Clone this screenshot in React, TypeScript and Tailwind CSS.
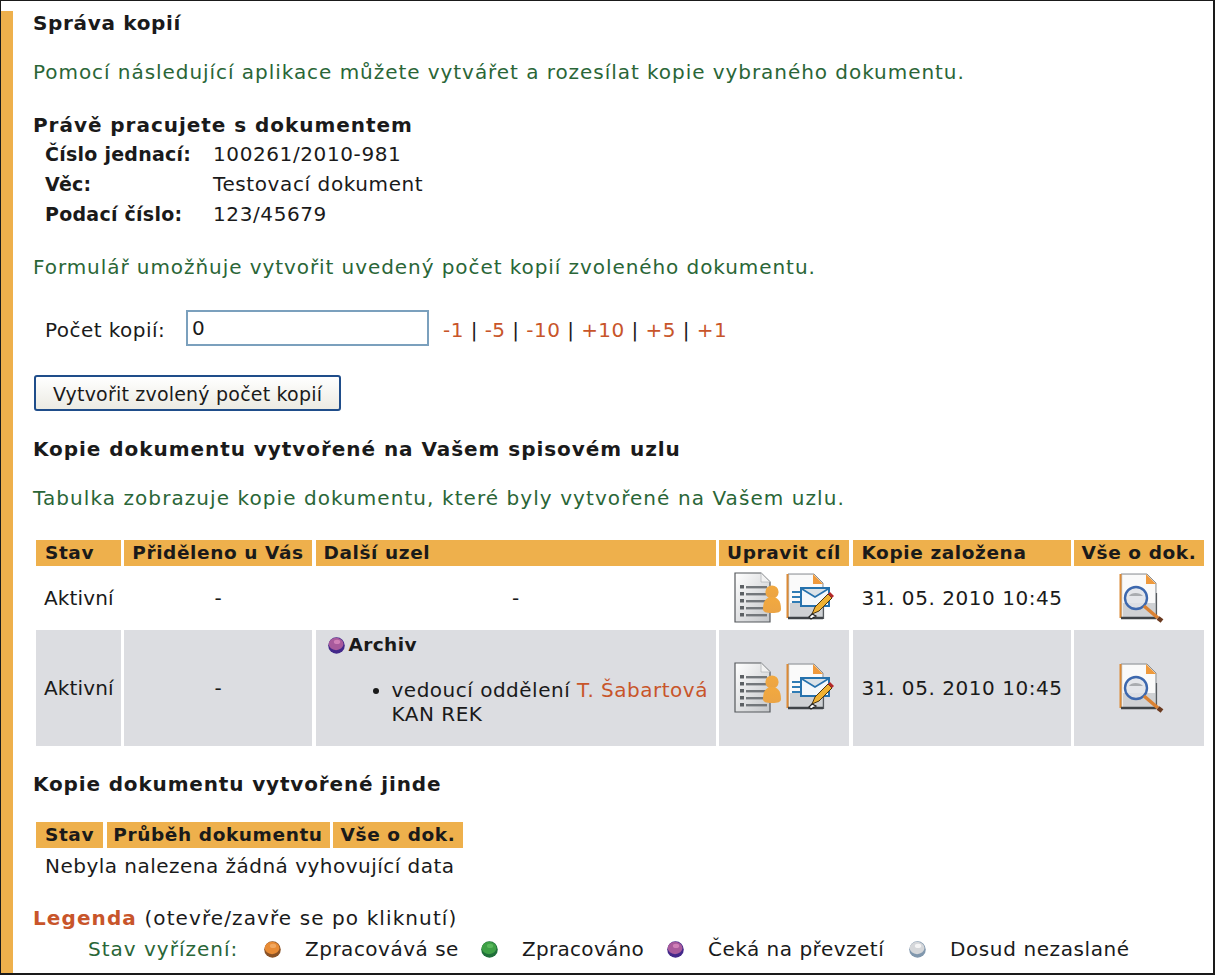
import React from 'react';

const font = { fontFamily: '"DejaVu Sans", Verdana, sans-serif' };

function Dot({ light, mid, dark, size = 17 }: { light: string; mid: string; dark: string; size?: number }) {
  return (
    <svg width={size} height={size} viewBox="0 0 16 16" className="shrink-0">
      <circle cx="8" cy="8" r="7.8" fill={dark} />
      <ellipse cx="7.6" cy="6.6" rx="7" ry="5.8" fill={mid} />
      <ellipse cx="8.5" cy="4.6" rx="3" ry="2" fill={light} />
    </svg>
  );
}

const Purple = (p: { size?: number }) => <Dot light="#d080b8" mid="#a85a9c" dark="#43288a" size={p.size} />;

function DocBase({ children }: { children: React.ReactNode }) {
  return (
    <>
      <path d="M3 1h26l9 9v35H3z" fill="#eceded" stroke="#8b8f94" strokeWidth="1" />
      <path d="M5 2h24l8 8v20H5z" fill="#fafafa" />
      <path d="M5 30h32v14H5z" fill="#cfd1d4" />
      <rect x="1.5" y="1" width="2" height="44" fill="#dc8a35" />
      <path d="M28 1l10 10H28z" fill="#ef9a3c" />
      <path d="M3 45h35" stroke="#3f4347" strokeWidth="2.4" />
      <path d="M38.5 20v26" stroke="#55595e" strokeWidth="1.2" />
      {children}
    </>
  );
}

function PersonDoc() {
  return (
    <svg width="50" height="54" viewBox="0 0 50 54" className="shrink-0">
      <defs>
        <linearGradient id="pg" x1="0" y1="0" x2="1" y2="1">
          <stop offset="0" stopColor="#ffffff" />
          <stop offset="1" stopColor="#c4c6c9" />
        </linearGradient>
        <linearGradient id="og" x1="0" y1="0" x2="0" y2="1">
          <stop offset="0" stopColor="#f2a93f" />
          <stop offset="1" stopColor="#eba445" />
        </linearGradient>
      </defs>
      <path d="M2 2h26l9 9v40H2z" fill="url(#pg)" stroke="#55585c" strokeWidth="1.2" />
      <path d="M28 2l9 9h-9z" fill="#f2f2f2" stroke="#b5b7ba" strokeWidth="0.8" />
      {[15, 22, 29, 36, 43].map((y) => (
        <g key={y}>
          <rect x="7" y={y - 1} width="4" height="3.5" fill="#5c6064" />
          <rect x="13" y={y} width="21" height="2.4" fill="#73777b" />
        </g>
      ))}
      <circle cx="39" cy="21" r="6.6" fill="url(#og)" />
      <path d="M30 38c0-9 4-12 9-12s9 3 9 12c0 3-3 4-9 4s-9-1-9-4z" fill="url(#og)" />
    </svg>
  );
}

function EnvelopeDoc() {
  return (
    <svg width="50" height="54" viewBox="0 0 50 50" className="shrink-0">
      <DocBase>
        <path d="M7 19h10M7 24h10M7 29h10" stroke="#2f7cb5" strokeWidth="2" />
        <path d="M16 15h28v18H16z" fill="#f4f8fb" stroke="#2672ad" strokeWidth="2" />
        <path d="M17 16l13 8 13-8" fill="#dce3e8" stroke="#2672ad" strokeWidth="1.6" />
        <path d="M27 41l3-7 13-13 4 4-13 13z" fill="#f0b232" stroke="#4a3510" strokeWidth="1" />
        <path d="M43 21l2-2 4 4-2 2z" fill="#b3282a" />
        <path d="M24 44l3-3 4 2-5 3z" fill="#fff" stroke="#222" strokeWidth="1.2" />
      </DocBase>
    </svg>
  );
}

function SearchDoc() {
  return (
    <svg width="50" height="50" viewBox="0 0 50 50" className="shrink-0">
      <DocBase>
        <circle cx="18" cy="25" r="11" fill="#dfe2e6" fillOpacity="0.85" stroke="#3d68ae" strokeWidth="2.4" />
        <path d="M11 23c2-4 11-4 14 0z" fill="#a9acb0" />
        <path d="M26 33l14 12" stroke="#db8233" strokeWidth="3.6" />
        <path d="M40 45l4 3" stroke="#6b3a20" strokeWidth="4.6" />
      </DocBase>
    </svg>
  );
}

function Th({ children, className = '' }: { children: React.ReactNode; className?: string }) {
  return <div className={`bg-[#eeb04c] h-[26px] leading-[26px] text-[18.5px] font-bold text-[#1a1a1a] tracking-[0.6px] text-center ${className}`}>{children}</div>;
}

function Td({ children, gray, className = '' }: { children: React.ReactNode; gray?: boolean; className?: string }) {
  return <div className={`flex items-center ${gray ? 'bg-[#dcdde1]' : ''} ${className}`}>{children}</div>;
}

function Row({ gray, children }: { gray?: boolean; children: React.ReactNode }) {
  return (
    <>
      <Td gray={gray} className="pl-[8px] tracking-[0.15px]">Aktivní</Td>
      <Td gray={gray} className="justify-center">-</Td>
      {children}
      <Td gray={gray} className="justify-center gap-[2px]"><PersonDoc /><EnvelopeDoc /></Td>
      <Td gray={gray} className="pl-[9px] whitespace-nowrap tracking-[0.55px]">31. 05. 2010 10:45</Td>
      <Td gray={gray} className="justify-center pl-[8px]"><SearchDoc /></Td>
    </>
  );
}

export default function App() {
  return (
    <div style={font} className="h-[975px] w-[1215px] overflow-hidden bg-white border-t border-b-2 border-l border-r-2 border-[#1a1a1a] text-[#1a1a1a] text-[20px]">
      <div className="h-full border-l-[12px] border-[#eeb04c] pl-[20px]">
        <h1 className="font-bold text-[20px] leading-[24px] mt-[10px] tracking-[0.67px]">Správa kopií</h1>
        <p className="text-[#2a6637] leading-[24px] mt-[25px] tracking-[0.95px] whitespace-nowrap">Pomocí následující aplikace můžete vytvářet a rozesílat kopie vybraného dokumentu.</p>

        <h2 className="font-bold text-[20px] leading-[26px] mt-[28px] tracking-[0.96px]">Právě pracujete s dokumentem</h2>
        <div className="grid grid-cols-[168px_1fr] ml-[12px] mt-[1px] leading-[30px] tracking-[0.6px]">
          <b className="text-[19px] tracking-[0.25px]">Číslo jednací:</b><span>100261/2010-981</span>
          <b className="text-[19px] tracking-[0.25px]">Věc:</b><span>Testovací dokument</span>
          <b className="text-[19px] tracking-[0.25px]">Podací číslo:</b><span>123/45679</span>
        </div>

        <p className="text-[#2a6637] leading-[24px] mt-[26px] tracking-[0.93px] whitespace-nowrap">Formulář umožňuje vytvořit uvedený počet kopií zvoleného dokumentu.</p>

        <div className="flex items-center ml-[12px] mt-[31px] h-[36px]">
          <span className="w-[141px] mt-[3px] tracking-[0.45px]">Počet kopií:</span>
          <input readOnly value="0" className="w-[243px] h-[36px] border-2 border-[#7ba0bd] bg-white px-[4px] outline-none" />
          <span className="ml-[14px] mt-[3px] whitespace-nowrap tracking-[0.45px]">
            <a className="text-[#c8552a]">-1</a> | <a className="text-[#c8552a]">-5</a> | <a className="text-[#c8552a]">-10</a> | <a className="text-[#c8552a]">+10</a> | <a className="text-[#c8552a]">+5</a> | <a className="text-[#c8552a]">+1</a>
          </span>
        </div>

        <button className="block mt-[29px] ml-[1px] w-[307px] h-[36px] pt-[2px] rounded-[3px] border-2 border-[#1f4d8a] bg-gradient-to-b from-white to-[#ecebe3] text-[19px] tracking-[0.2px] text-[#1a1a1a] text-center">Vytvořit zvolený počet kopií</button>

        <h2 className="font-bold text-[20px] leading-[24px] mt-[26px] tracking-[0.95px] whitespace-nowrap">Kopie dokumentu vytvořené na Vašem spisovém uzlu</h2>
        <p className="text-[#2a6637] leading-[24px] mt-[25px] tracking-[1.07px] whitespace-nowrap">Tabulka zobrazuje kopie dokumentu, které byly vytvořené na Vašem uzlu.</p>

        <div className="grid grid-cols-[84.5px_188px_400px_130px_218px_130px] grid-rows-[26px_64px_116px] gap-x-[3.5px] ml-[3px] mt-[30px] w-[1169px]">
          <Th className="text-left pl-[9px]">Stav</Th>
          <Th>Přiděleno u Vás</Th>
          <Th className="text-left pl-[8px]">Další uzel</Th>
          <Th>Upravit cíl</Th>
          <Th className="text-left pl-[9px]">Kopie založena</Th>
          <Th>Vše o dok.</Th>
          <Row><Td className="justify-center">-</Td></Row>
          <Row gray>
            <div className="bg-[#dcdde1] pl-[12px]">
              <div className="flex items-center gap-[4px] h-[30px]">
                <Purple size={17} />
                <b className="text-[18.5px] tracking-[0.4px]">Archiv</b>
              </div>
              <ul className="list-disc ml-[64px] mt-[18px] leading-[24px] marker:text-[#1a1a1a] tracking-[0.5px]">
                <li className="whitespace-nowrap">vedoucí oddělení <a className="text-[#c8552a]">T. Šabartová</a><br />KAN REK</li>
              </ul>
            </div>
          </Row>
        </div>

        <h2 className="font-bold text-[20px] leading-[24px] mt-[26px] tracking-[0.85px]">Kopie dokumentu vytvořené jinde</h2>

        <div className="grid grid-cols-[67px_223px_130px] gap-x-[3.5px] ml-[3px] mt-[26px] w-max">
          <Th className="text-left pl-[9px]">Stav</Th>
          <Th>Průběh dokumentu</Th>
          <Th>Vše o dok.</Th>
        </div>
        <div className="ml-[12px] mt-[5px] leading-[26px] tracking-[0.48px]">Nebyla nalezena žádná vyhovující data</div>

        <p className="mt-[26px] leading-[26px] tracking-[1.1px] whitespace-nowrap"><b className="text-[#c8552a]">Legenda</b> (otevře/zavře se po kliknutí)</p>
        <div className="flex items-center ml-[55px] leading-[26px] mt-[5px] whitespace-nowrap tracking-[0.5px]">
          <span className="text-[#2a6637] w-[176px] tracking-[1px]">Stav vyřízení:</span>
          <Dot light="#f2a860" mid="#e88b35" dark="#8a5226" />
          <span className="ml-[24px] w-[176px]">Zpracovává se</span>
          <Dot light="#5ab85c" mid="#3ea046" dark="#1f6f3a" />
          <span className="ml-[24px] w-[145px] tracking-[0.3px]">Zpracováno</span>
          <Purple />
          <span className="ml-[24px] w-[201px]">Čeká na převzetí</span>
          <Dot light="#f4f4f5" mid="#d5d7da" dark="#8097ad" />
          <span className="ml-[24px] tracking-[0.6px]">Dosud nezaslané</span>
        </div>
      </div>
    </div>
  );
}
